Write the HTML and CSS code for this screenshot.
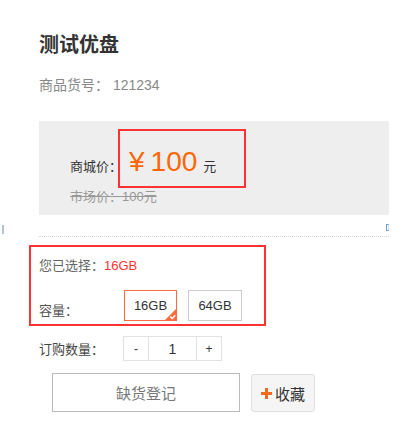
FILE: index.html
```html
<!DOCTYPE html>
<html lang="zh">
<head>
<meta charset="utf-8">
<title>测试优盘</title>
<link rel="stylesheet" href="styles.css">
</head>
<body>
<div class="page">
  <h1 class="title">测试优盘</h1>
  <div class="sku">商品货号： 121234</div>
  <div class="price-box">
    <div class="price-row">
      <span class="price-label">商城价：</span>
      <div class="price-hl">
        <span class="yen">¥</span><span class="num">100</span><span class="unit">元</span>
      </div>
    </div>
    <div class="market">市场价：100元</div>
  </div>
</div>
<div class="marks"><span class="mark-l"></span><span class="mark-r"></span></div>
<div class="dots"></div>
<div class="select-box">
  <div class="chosen">您已选择：<span class="chosen-val">16GB</span></div>
  <div class="cap-row">
    <span class="cap-label">容量：</span>
    <div class="opt opt-on">16GB
      <span class="corner"><svg width="13" height="13" viewBox="0 0 13 13"><path d="M13 0 L13 13 L0 13 Z" fill="#f96c3e"/><path d="M6.2 8.6 L8.2 10.4 L11.2 7.2" fill="none" stroke="#fff" stroke-width="1.4"/></svg></span>
    </div>
    <div class="opt">64GB</div>
  </div>
</div>
<div class="qty-row">
  <span class="qty-label">订购数量：</span>
  <div class="qty">
    <span class="qty-btn">-</span><span class="qty-val">1</span><span class="qty-btn">+</span>
  </div>
</div>
<div class="btn-row">
  <div class="btn-reg">缺货登记</div>
  <div class="btn-fav"><svg class="plus" width="11" height="11" viewBox="0 0 11 11"><rect x="4" y="0" width="3" height="11" fill="#f26b1d"/><rect x="0" y="4" width="11" height="3" fill="#f26b1d"/></svg>收藏</div>
</div>
</body>
</html>
```
FILE: styles.css
```css
* { box-sizing: border-box; }
html, body { margin: 0; padding: 0; background: #fff; }
body {
  font-family: "Liberation Sans", "Noto Sans CJK SC", sans-serif;
  color: #333;
  font-size: 13px;
  width: 410px;
  height: 447px;
  overflow: hidden;
}
.page { padding-left: 39px; }
.title {
  margin: 31px 0 0;
  font-size: 20px;
  line-height: 28px;
  font-weight: bold;
  color: #333;
}
.sku {
  margin-top: 16px;
  font-size: 14px;
  line-height: 20px;
  color: #888;
}
.price-box {
  margin-top: 26px;
  width: 350px;
  height: 94px;
  background: #eeeeee;
  padding: 8px 0 0 31px;
}
.price-row {
  display: flex;
  align-items: baseline;
}
.price-label { font-size: 13px; color: #333; }
.price-hl {
  display: flex;
  align-items: baseline;
  width: 128px;
  height: 59px;
  margin-left: -4px;
  padding: 17px 0 0 9px;
  border: 2px solid #f33;
}
.yen { font-size: 28px; line-height: 28px; color: #ff6600; margin-right: 6px; }
.num { font-size: 28px; line-height: 28px; color: #ff6600; }
.unit { font-size: 13px; color: #333; margin-left: 6px; }
.market {
  margin-top: 1px;
  font-size: 13px;
  line-height: 15px;
  color: #999;
  text-decoration: line-through;
}
.marks {
  display: flex;
  justify-content: space-between;
  align-items: flex-start;
  height: 12px;
  margin-top: 9px;
  padding: 0 21px 0 2px;
}
.mark-l { width: 2px; height: 9px; margin-top: 1px; background: #b4c2d2; }
.mark-r { width: 3px; height: 7px; border: 1px solid #6b9ccc; border-right-color: #cfe0ef; }
.dots {
  margin-left: 39px;
  width: 350px;
  border-top: 1px dotted #d8d8d8;
}
.select-box {
  margin: 8px 0 0 29px;
  width: 237px;
  height: 81px;
  border: 2px solid #f33;
  padding: 9px 0 0 8px;
}
.chosen { font-size: 13px; line-height: 20px; color: #666; }
.chosen-val { color: #f33; }
.cap-row {
  display: flex;
  align-items: center;
  margin-top: 14px;
}
.cap-label {
  width: 85px;
  margin-top: 8px;
  color: #555;
  font-size: 13px;
}
.opt {
  position: relative;
  width: 54px;
  height: 31px;
  border: 1px solid #ccc;
  display: flex;
  align-items: center;
  justify-content: center;
  font-size: 13px;
  color: #333;
  margin-right: 11px;
}
.opt-on { width: 53px; border-color: #f96c3e; }
.corner { position: absolute; right: -1px; bottom: -1px; width: 13px; height: 13px; line-height: 0; }
.qty-row {
  display: flex;
  align-items: center;
  margin-top: 10px;
  padding-left: 39px;
}
.qty-label { width: 84px; color: #444; font-size: 13px; }
.qty {
  display: flex;
  height: 25px;
  border: 1px solid #e2e2e2;
}
.qty-btn, .qty-val {
  display: flex;
  align-items: center;
  justify-content: center;
  font-size: 12px;
  color: #333;
}
.qty-btn { width: 24px; }
.qty-val { width: 49px; border-left: 1px solid #e2e2e2; border-right: 1px solid #e2e2e2; font-size: 14px; }
.btn-row {
  display: flex;
  align-items: flex-start;
  margin-top: 12px;
  padding-left: 52px;
}
.btn-reg {
  width: 188px;
  height: 39px;
  border: 1px solid #bbb;
  display: flex;
  align-items: center;
  justify-content: center;
  font-size: 15px;
  color: #777;
}
.btn-fav {
  margin-left: 11px;
  margin-top: 1px;
  width: 64px;
  height: 38px;
  background: #f5f5f5;
  border: 1px solid #e0e0e0;
  border-radius: 3px;
  display: flex;
  align-items: center;
  justify-content: center;
  font-size: 15px;
  color: #333;
}
.plus { margin-right: 3px; }
```
